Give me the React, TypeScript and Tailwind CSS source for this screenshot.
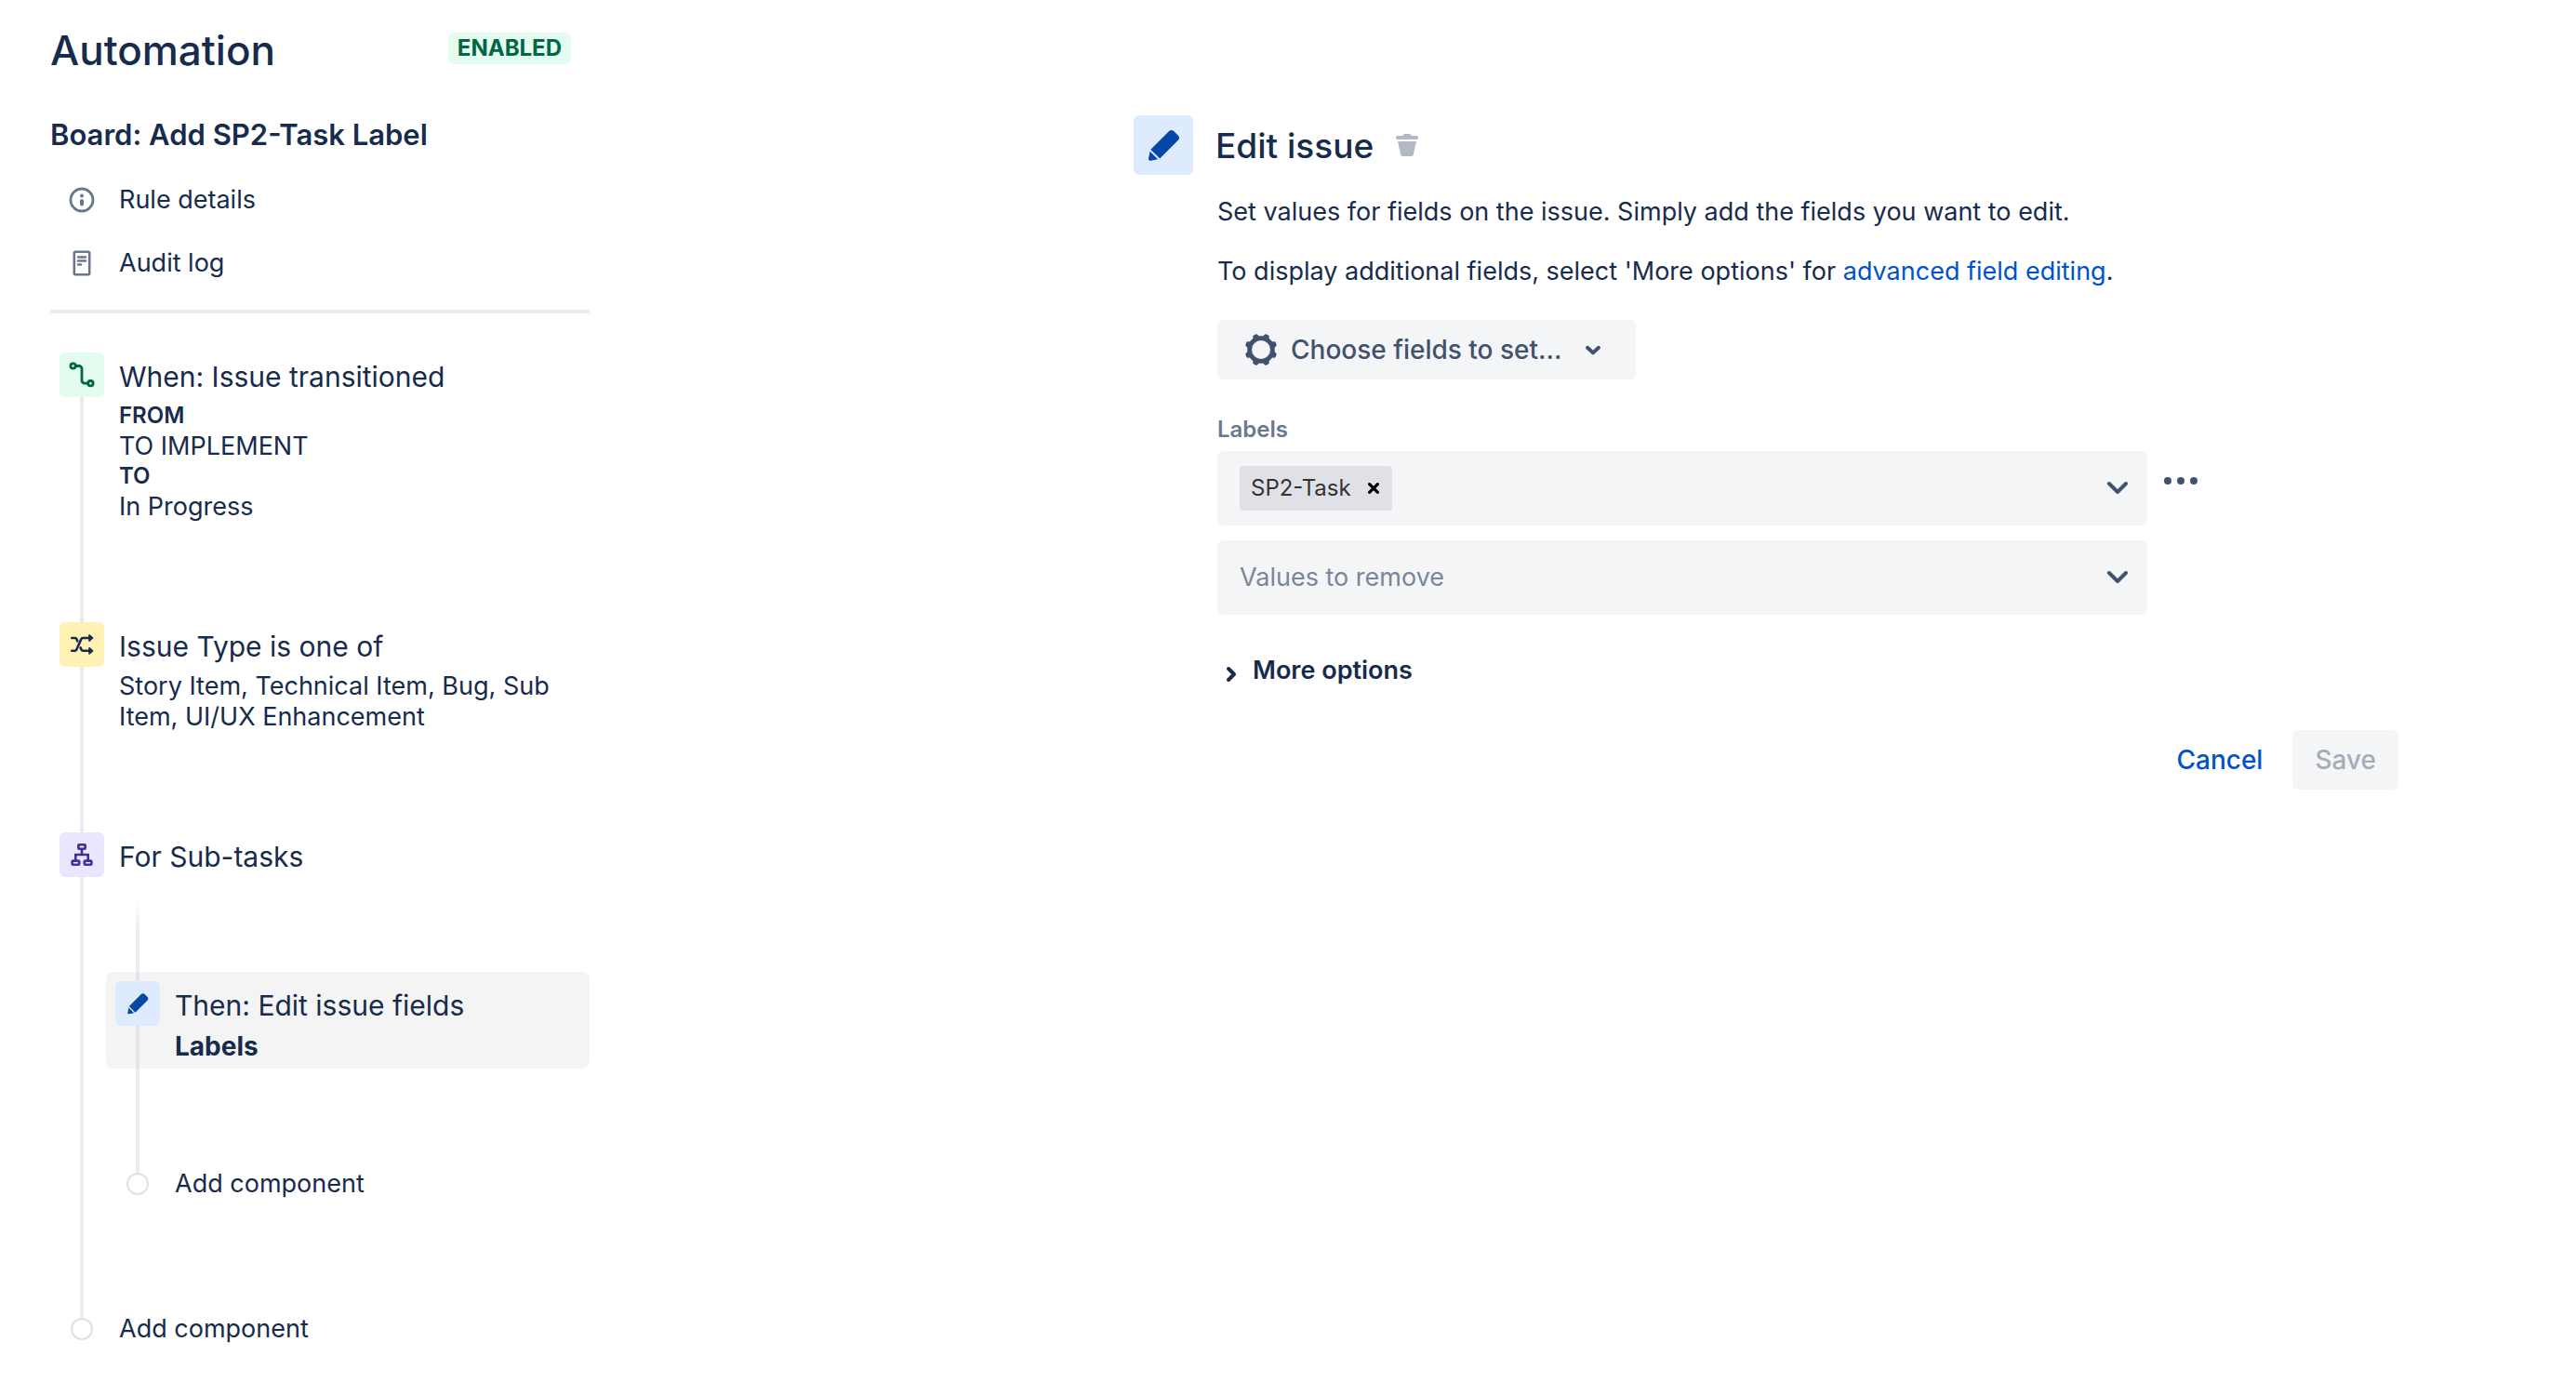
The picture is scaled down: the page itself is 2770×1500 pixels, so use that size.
import React from "react";

type IconProps = { className?: string };

function PencilIcon({ className }: IconProps) {
  return (
    <svg viewBox="0 0 24 24" className={className} fill="currentColor" aria-hidden="true">
      <path d="M4.02 19.23a1 1 0 0 0 1.18 1.18l3.81-.78-4.21-4.21-.78 3.81z" />
      <path d="M19.844 6.707l-2.12-2.12A1.997 1.997 0 0 0 16.31 4c-.51 0-1.02.2-1.41.59l-9.757 9.75 4.94 4.94 9.76-9.75a2 2 0 0 0 0-2.83z" />
    </svg>
  );
}

function InfoIcon() {
  return (
    <svg viewBox="0 0 28 28" className="size-7" fill="none" aria-hidden="true">
      <circle cx="14" cy="14" r="12" stroke="currentColor" strokeWidth="2.8" />
      <circle cx="14" cy="9.4" r="2" fill="currentColor" />
      <rect x="12" y="12.9" width="4" height="7.6" rx="2" fill="currentColor" />
    </svg>
  );
}

function LogIcon() {
  return (
    <svg viewBox="0 0 28 28" className="size-7" fill="none" stroke="currentColor" aria-hidden="true">
      <rect x="5.8" y="1.8" width="16.4" height="24.4" rx="1.4" strokeWidth="2.6" />
      <path d="M10 7.5h8M10 11.5h8M10 15.5h3" strokeWidth="2.6" strokeLinecap="round" />
    </svg>
  );
}

function TransitionIcon() {
  return (
    <svg viewBox="0 0 48 48" className="size-12" fill="none" stroke="#006644" strokeWidth="2.8" aria-hidden="true">
      <circle cx="14.6" cy="14.5" r="2.7" />
      <circle cx="33.4" cy="33.2" r="2.7" />
      <path d="M17.5 14.5h3.5a3 3 0 0 1 3 3v12.7a3 3 0 0 0 3 3h3.5" />
    </svg>
  );
}

function ShuffleIcon() {
  return (
    <svg viewBox="0 0 48 48" className="size-12" fill="none" stroke="#172b4d" strokeWidth="2.6" strokeLinecap="round" strokeLinejoin="round" aria-hidden="true">
      <path d="M13.3 30.8h3.2a2 2 0 0 0 1.8-1.2l5-11.4a2 2 0 0 1 1.8-1.2H33M13.3 17h3.4a2 2 0 0 1 1.8 1.2l.7 2M22.6 27.4l.9 2.2a2 2 0 0 0 1.8 1.2H33" />
      <path d="M32 13.9l3.6 3.1-3.6 3.1zM32 27.7l3.6 3.1-3.6 3.1z" fill="#172b4d" strokeWidth="1.6" />
    </svg>
  );
}

function TreeIcon() {
  return (
    <svg viewBox="0 0 48 48" className="size-12" fill="none" stroke="#403294" strokeWidth="2.6" aria-hidden="true">
      <rect x="20.3" y="13.3" width="7.4" height="4.4" rx="1" />
      <rect x="13.6" y="30.6" width="7.6" height="4.2" rx="1" />
      <rect x="26.8" y="30.6" width="7.6" height="4.2" rx="1" />
      <path d="M24 18v6M17.3 30v-6h13.4v6" />
    </svg>
  );
}

function TrashIcon() {
  return (
    <svg viewBox="0 0 24 24" className="size-6" fill="currentColor" aria-hidden="true">
      <rect x="7.5" y="0" width="9" height="5" rx="2" />
      <rect x="0" y="2" width="24" height="4" rx="1.8" />
      <path d="M2 8h20l-3.2 14.5a2 2 0 0 1-2 1.5H7.2a2 2 0 0 1-2-1.5z" />
    </svg>
  );
}

const TEETH = [22.5, 67.5, 112.5, 157.5, 202.5, 247.5, 292.5, 337.5];

function GearIcon() {
  return (
    <svg viewBox="0 0 36 36" className="size-9" fill="none" aria-hidden="true">
      <circle cx="18" cy="18" r="12.4" stroke="currentColor" strokeWidth="4.8" />
      {TEETH.map((angle) => (
        <path
          key={angle}
          d="M13.2 5.5c1.4-.9 1.6-2.2 2-3.6a1.9 1.9 0 0 1 1.9-1.4h1.8a1.9 1.9 0 0 1 1.9 1.4c.4 1.4.6 2.7 2 3.6z"
          fill="currentColor"
          transform={`rotate(${angle} 18 18)`}
        />
      ))}
    </svg>
  );
}

function ChevronDown({ className }: IconProps) {
  return (
    <svg viewBox="0 0 24 16" className={className} fill="none" stroke="currentColor" strokeWidth="4" strokeLinecap="round" strokeLinejoin="round" aria-hidden="true">
      <path d="M3 3l9 9 9-9" />
    </svg>
  );
}

function SmallChevronDown() {
  return (
    <svg viewBox="0 0 20 20" className="size-5" fill="none" stroke="currentColor" strokeWidth="4" strokeLinecap="round" strokeLinejoin="round" aria-hidden="true">
      <path d="M4 7.8l6 5.6 6-5.6" />
    </svg>
  );
}

function Tile({ className, children }: { className: string; children: React.ReactNode }) {
  return <span className={`grid size-12 shrink-0 place-items-center rounded-md ${className}`}>{children}</span>;
}

function Rail({ children }: { children: React.ReactNode }) {
  return (
    <div className="flex w-12 shrink-0 flex-col items-center">
      {children}
      <span className="w-1 flex-1 bg-[#ebecf0]" />
    </div>
  );
}

function AddComponent() {
  return (
    <button type="button" className="flex items-center gap-4 leading-6">
      <span className="grid w-12 place-items-center">
        <span className="size-6 rounded-full border-2 border-[#dfe1e6] bg-white" />
      </span>
      Add component
    </button>
  );
}

function Sidebar() {
  return (
    <aside className="w-[580px] shrink-0">
      <header className="flex items-center justify-between pr-5">
        <h1 className="text-[44px] leading-[56px] font-medium">Automation</h1>
        <span className="mb-1 flex h-[34px] items-center rounded-md bg-[#e3fcef] px-2.5 text-[24px] font-bold text-[#006644]">
          ENABLED
        </span>
      </header>
      <h2 className="mt-[43px] text-[31px] leading-10 font-semibold">Board: Add SP2-Task Label</h2>

      <nav className="mt-8 flex flex-col gap-8 pl-5">
        <a href="#details" className="flex items-center gap-[26px] leading-9">
          <span className="text-[#6b778c]"><InfoIcon /></span>
          Rule details
        </a>
        <a href="#audit" className="flex items-center gap-[26px] leading-9">
          <span className="text-[#6b778c]"><LogIcon /></span>
          Audit log
        </a>
      </nav>
      <hr className="mt-8 border-0 border-t-4 border-[#ebecf0]" />

      <ol className="mt-[42px] pl-2.5">
        <li className="flex min-h-[290px] gap-4">
          <Rail>
            <Tile className="bg-[#e3fcef]"><TransitionIcon /></Tile>
          </Rail>
          <div className="pt-1.5">
            <h3 className="text-[30px] leading-10">When: Issue transitioned</h3>
            <dl className="mt-1.5">
              <dt className="text-[24px] leading-8 font-semibold">FROM</dt>
              <dd className="leading-[33px]">TO IMPLEMENT</dd>
              <dt className="text-[24px] leading-8 font-semibold">TO</dt>
              <dd className="leading-[33px]">In Progress</dd>
            </dl>
          </div>
        </li>
        <li className="flex min-h-[226px] gap-4">
          <Rail>
            <Tile className="bg-[#fff0b3]"><ShuffleIcon /></Tile>
          </Rail>
          <div className="pt-1.5">
            <h3 className="text-[30px] leading-10">Issue Type is one of</h3>
            <p className="mt-1.5 leading-[33px]">Story Item, Technical Item, Bug, Sub Item, UI/UX Enhancement</p>
          </div>
        </li>
        <li className="flex gap-0.5">
          <Rail>
            <Tile className="bg-[#eae6ff]"><TreeIcon /></Tile>
          </Rail>
          <div className="flex-1 pb-[132px]">
            <h3 className="pt-1.5 pl-3.5 text-[30px] leading-10">For Sub-tasks</h3>
            <ol className="mt-6">
              <li>
                <div className="ml-2.5 flex w-12 justify-center">
                  <span className="h-20 w-1 bg-linear-to-b from-white to-[#ebecf0] to-50%" />
                </div>
                <button type="button" className="flex w-full gap-4 rounded-lg bg-[#f4f4f4] px-2.5 text-left">
                  <span className="flex w-12 shrink-0 flex-col items-center self-stretch">
                    <span className="h-2.5 w-1 bg-[#e4e5e9]" />
                    <Tile className="bg-[#deebff] text-[#0747a6]"><PencilIcon className="size-8" /></Tile>
                    <span className="w-1 flex-1 bg-[#e4e5e9]" />
                  </span>
                  <span className="flex flex-col pt-4 pb-1">
                    <span className="text-[30px] leading-10">Then: Edit issue fields</span>
                    <span className="mt-1 text-[28px] leading-10 font-bold">Labels</span>
                  </span>
                </button>
              </li>
              <li className="pl-2.5">
                <div className="flex w-12 justify-center">
                  <span className="h-[112px] w-1 bg-[#ebecf0]" />
                </div>
                <AddComponent />
              </li>
            </ol>
          </div>
        </li>
        <li>
          <AddComponent />
        </li>
      </ol>
    </aside>
  );
}

const FIELD = "flex h-20 w-full items-center rounded-md bg-[#f4f5f7] pl-6 pr-5";

function Editor() {
  return (
    <main className="ml-auto w-full max-w-[1360px] pt-[98px]">
      <header className="flex items-center">
        <span className="grid size-16 place-items-center rounded-md bg-[#deebff] text-[#0747a6]">
          <PencilIcon className="size-12" />
        </span>
        <h2 className="ml-6 pt-0.5 text-[37px] leading-[48px] font-medium">Edit issue</h2>
        <button type="button" aria-label="Delete component" className="ml-6 text-[#b3bac5]">
          <TrashIcon />
        </button>
      </header>

      <div className="pl-[90px]">
        <p className="mt-5 leading-10">
          Set values for fields on the issue. Simply add the fields you want to edit.
        </p>
        <p className="mt-6 leading-10">
          To display additional fields, select 'More options' for{" "}
          <a href="#advanced" className="text-[#0052cc]">advanced field editing</a>.
        </p>

        <button type="button" className="mt-8 flex h-16 items-center rounded-md bg-[#f4f5f7] pr-9 pl-[29px] text-[28px] font-medium text-[#42526e]">
          <GearIcon />
          <span className="mr-6 ml-3.5">Choose fields to set...</span>
          <SmallChevronDown />
        </button>

        <label htmlFor="labels" className="mt-9 block pt-0.5 text-[24px] leading-8 font-semibold text-[#6b778c]">
          Labels
        </label>
        <div className="mt-[7px] flex gap-4">
          <div className="flex w-full max-w-[1000px] flex-col gap-4">
            <div className={FIELD}>
              <span className="flex h-12 items-center rounded-sm bg-[#dfe1e6] pr-3.5 pl-3 text-[24px] text-[#333]">
                SP2-Task
                <button type="button" aria-label="Remove SP2-Task" className="ml-[18px] text-black">
                  <svg viewBox="0 0 12 12" className="size-3" fill="none" stroke="currentColor" strokeWidth="3.2" strokeLinecap="round" aria-hidden="true">
                    <path d="M1.6 1.6l8.8 8.8M10.4 1.6l-8.8 8.8" />
                  </svg>
                </button>
              </span>
              <input id="labels" type="text" className="min-w-0 flex-1 bg-transparent px-2 outline-none" />
              <button type="button" aria-label="Show labels" className="text-[#42526e]">
                <ChevronDown className="h-4 w-6" />
              </button>
            </div>
            <div className="relative">
              <select aria-label="Values to remove" className={`${FIELD} appearance-none text-[#7a869a]`}>
                <option>Values to remove</option>
              </select>
              <span className="pointer-events-none absolute inset-y-0 right-5 flex items-center text-[#42526e]">
                <ChevronDown className="h-4 w-6" />
              </span>
            </div>
          </div>
          <button type="button" aria-label="Field actions" className="flex h-16 items-center gap-1.5 px-0.5">
            <span className="size-2 rounded-full bg-[#42526e]" />
            <span className="size-2 rounded-full bg-[#42526e]" />
            <span className="size-2 rounded-full bg-[#42526e]" />
          </button>
        </div>

        <button type="button" className="mt-10 flex items-center gap-4 pl-2 leading-10 font-semibold">
          <svg viewBox="0 0 14 20" className="mt-2 h-5 w-3.5" fill="none" stroke="currentColor" strokeWidth="4" strokeLinecap="round" strokeLinejoin="round" aria-hidden="true">
            <path d="M4 4l6 6-6 6" />
          </svg>
          More options
        </button>

        <div className="mt-11 flex justify-end gap-2 text-[28px] font-medium">
          <button type="button" className="h-16 px-6 text-[#0052cc]">Cancel</button>
          <button type="button" disabled className="h-16 rounded-md bg-[#f4f5f7] px-6 text-[#a5adba]">Save</button>
        </div>
      </div>
    </main>
  );
}

export default function App() {
  return (
    <div className="flex min-h-screen gap-16 bg-white pt-[26px] pr-[191px] pb-12 pl-[54px] font-[Inter,sans-serif] text-[27px] text-[#172b4d]">
      <Sidebar />
      <Editor />
    </div>
  );
}
